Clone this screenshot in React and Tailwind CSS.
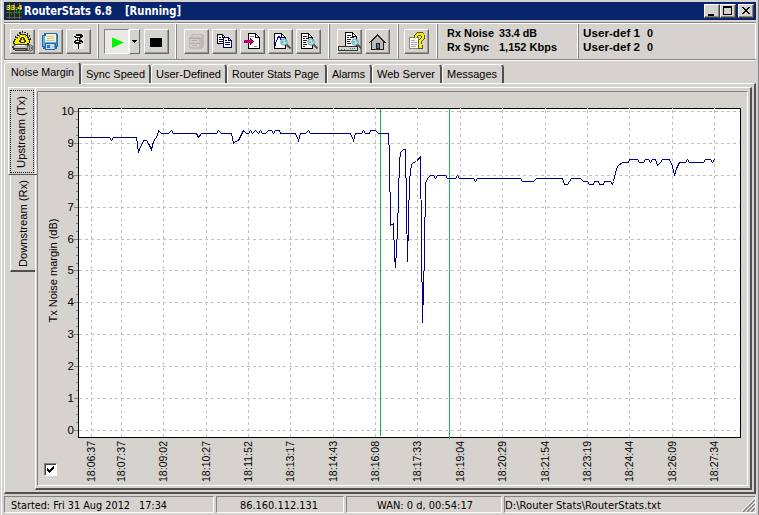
import React, { useState } from "react";

const points = [
    [78,137],[109,137],[111,140],[113,137],[136,137],[138,152],[140,146],[142,143],[143,140],[146,140],[148,143],[151,149],
    [153,141],[155,138],[157,135],[158,130],[161,133],[168,133],[171,130],[173,133],[196,133],[198,137],[201,133],[216,133],
    [218,130],[221,133],[231,133],[233,143],[235,141],[238,140],[240,136],[243,130],[246,133],[248,133],[250,130],[252,133],
    [255,130],[258,133],[260,130],[262,133],[265,133],[268,130],[271,130],[273,133],[275,130],[279,130],[280,133],[295,133],
    [298,140],[300,133],[305,133],[308,130],[310,133],[350,133],[353,140],[355,133],[361,133],[363,130],[365,133],[369,133],
    [370,130],[375,130],[378,133],[388,133],[389,156],[390,225],[393,223],[394,256],[395,267],[397,230],[399,161],[400,152],
    [403,149],[405,149],[407,261],[409,180],[411,164],[413,162],[416,161],[420,156],[422,322],[424,253],[425,182],[428,177],
    [430,175],[433,175],[435,178],[437,175],[445,175],[447,178],[455,178],[457,175],[459,178],[473,178],[475,181],[477,178],
    [520,178],[522,181],[533,181],[536,178],[562,178],[564,184],[567,184],[571,178],[580,178],[583,181],[587,181],[589,184],
    [593,184],[594,181],[598,181],[599,184],[603,184],[604,181],[610,181],[612,184],[613,181],[616,168],[618,165],[622,162],
    [628,162],[629,159],[637,159],[639,162],[643,162],[645,159],[648,159],[650,162],[652,159],[655,159],[657,165],[660,162],
    [662,159],[669,159],[672,166],[674,175],[676,168],[679,162],[685,162],[687,159],[689,162],[703,162],[705,159],[710,159],
    [712,162],[714,159],
]

const times = [
    [91, "18:06:37"], [121, "18:07:37"], [163, "18:09:02"], [206, "18:10:27"], [248, "18:11:52"], [290, "18:13:17"],
    [333, "18:14:43"], [375, "18:16:08"], [417, "18:17:33"], [460, "18:19:04"], [502, "18:20:29"], [545, "18:21:54"],
    [587, "18:23:19"], [629, "18:24:44"], [672, "18:26:09"], [714, "18:27:34"],
]

const levels = [[111, 10], [143, 9], [175, 8], [207, 7], [239, 6], [270, 5], [302, 4], [334, 3], [366, 2], [398, 1], [430, 0]]

const tabs = [
    { label: "Sync Speed", width: "w-[70px]", len: 59 },
    { label: "User-Defined", width: "w-[76px]", len: 65 },
    { label: "Router Stats Page", width: "w-[100px]", len: 87 },
    { label: "Alarms", width: "w-[45px]", len: 33 },
    { label: "Web Server", width: "w-[70px]", len: 58 },
    { label: "Messages", width: "w-[62px]", len: 50 },
]

// single line of text fitted to a fixed length
function Label({ children, len, size = 11, bold, tahoma, fill = "#000" }) {
    return (
        <svg width={len + 2} height="16" className="block shrink-0 overflow-visible">
            <text
                x="0" y="12" fontSize={size} fill={fill} fontWeight={bold ? 700 : 400}
                textLength={len} lengthAdjust="spacingAndGlyphs"
                fontFamily={tahoma ? "'DejaVu Sans Condensed', 'DejaVu Sans', sans-serif" : "'Liberation Sans', sans-serif"}
            >{children}</text>
        </svg>
    )
}

function Icon({ children }) {
    return <svg width="23" height="23" viewBox="0 0 23 23" shapeRendering="crispEdges" className="block">{children}</svg>
}

function ToolButton({ children }) {
    return (
        <button className="block h-[25px] w-[25px] shrink-0 border border-t-white border-l-white border-r-[#6b6968] border-b-[#6b6968] shadow-[inset_-1px_-1px_0_#9c9a98]">
            {children}
        </button>
    )
}

function Page({ x, y }) {
    return (
        <g>
            <path d={`M${x} ${y}h8l4 4v12h-12z`} fill="#fff" />
            <path d={`M${x + .5} ${y + .5}h7l4 4v11h-11zM${x + 7.5} ${y + .5}v4h4`} fill="none" stroke="#000" />
        </g>
    )
}

function Magnifier({ x, y }) {
    return (
        <g shapeRendering="auto">
            <path d={`M${x + 6.5} ${y + 6.5}l4 4`} stroke="#42525a" strokeWidth="2" />
            <circle cx={x + 4} cy={y + 4} r="3.2" fill="#c4e0e4" stroke="#7b929c" />
            <path d={`M${x + 2} ${y + 3}h2v2h-2zM${x + 5} ${y + 2}h1v2h-1z`} fill="#20dce8" />
        </g>
    )
}

function RouterIcon() {
    return (
        <Icon>
            <g fill="#2c2b22">
                <path d="M4 6h1v2H4zM6 4h1v2H6zM8 2h2v2H8zM11 1h1v2h-1zM13 2h2v1h-2zM16 3h1v2h-1zM18 5h1v2h-1zM19 8h1v2h-1z" />
                <path d="M3 9h2V7h2V5h2V4h6v1h2v2h1v2h1v4h-1v2H3v-1H2v-3h1z" />
            </g>
            <path d="M4 10h1V8h2V6h2V5h6v1h1v2h1v2h1v3h-2v1H4v-1H3v-1h1z" fill="#ffef00" />
            <path d="M8 5h1v2H8zM14 5h1v2h-1zM6 8h1v1H6z" fill="#8c8400" />
            <path d="M10 7h3v1h1v2h1v2h-1v1H9v-1H8v-2h1V8h1z" fill="#39382a" />
            <path d="M11 8h1v2h1v2h-3v-2h1z" fill="#ffef00" />
            <path d="M3 14h13v1h2v1h2v4h-2v1H4v-1H2v-2H1v-2h2z" fill="#39393a" />
            <path d="M4 15h12v1h1v2H3v-2h1z" fill="#c6c5c2" />
            <path d="M5 15h9v1H5z" fill="#fff" />
            <path d="M4 19h11v1H4z" fill="#848284" />
            <circle cx="19" cy="18" r="3" fill="#c0c0c0" stroke="#5a595a" shapeRendering="auto" />
            <path d="M18 16h1v4h-1zM20 17h1v2h-1z" fill="#525152" />
        </Icon>
    )
}

function DiskIcon() {
    return (
        <Icon>
            <path d="M5 3h13v1h1v13h-1v2h-2v1H6v-1H4v-2H3V5h2z" fill="#2169b5" />
            <path d="M4 6h2v10H4z" fill="#63b2e7" />
            <path d="M17 5h1v11h-1z" fill="#398ace" />
            <path d="M7 4h10v8H6V6h1z" fill="#f4f3c8" />
            <path d="M8 6h7v1H8zM8 8h7v1H8zM7 10h8v1H7z" fill="#c8c69c" />
            <path d="M6 12h11v1H6z" fill="#5aaee7" />
            <path d="M7 14h9v5H7z" fill="#c9dbe9" />
            <path d="M8 15h3v3H8z" fill="#3975ad" />
            <path d="M15 14h1v5h-1z" fill="#849aad" />
        </Icon>
    )
}

function PinIcon() {
    return (
        <Icon>
            <path d="M6 4h11v15H6z" fill="#e9e7e2" />
            <path d="M9 4h6v1h1v2h-1v1h-1v2h1v1h1v2h-2v1h-2v5h-1v-5H8v-1H7v-2h1v-1h2V8H8V7H7V6h2z" fill="#111" />
            <path d="M9 6h4v1H9zM11 8h1v2h-1zM9 11h3v1H9z" fill="#fff" />
            <path d="M13 8h1v2h-1zM13 12h2v1h-2z" fill="#848284" />
        </Icon>
    )
}

function CabinetIcon() {
    return (
        <Icon>
            <path d="M7 4h10l2 2v10l-3 3H5l-1-2V7z" fill="#bfb8bc" />
            <path d="M8 5h8l1 2H7zM5 9h9v4H5z" fill="#d3cacc" />
            <path d="M5 8h10v1H5zM5 13h10v1H5z" fill="#b0a8ad" />
            <path d="M5 14h9v3H5z" fill="#d8cfc8" />
            <path d="M7 10h5v1H7zM7 15h5v1H7z" fill="#b3abb6" />
        </Icon>
    )
}

function CopyIcon() {
    return (
        <Icon>
            <path d="M4 4h6l3 3v7H4z" fill="#fff" />
            <path d="M4.500 4.500h5l3 3v6h-8zM9.500 4.500v3h3" fill="none" stroke="#000" />
            <path d="M6 7h2v1H6zM6 9h4v1H6zM6 11h4v1H6z" fill="#000" />
            <path d="M10 7h6l3 3v8h-9z" fill="#fff" />
            <path d="M10.500 7.500h5l3 3v7h-8zM15.500 7.500v3h3" fill="none" stroke="#00007b" />
            <path d="M12 10h2v1h-2zM12 12h5v1h-5zM12 14h5v1h-5z" fill="#00007b" />
        </Icon>
    )
}

function ExportIcon() {
    return (
        <Icon>
            <Page x={7} y={3} />
            <path d="M9 6h4v1H9zM13 16h3v1h-3z" fill="#888" />
            <path d="M3 10h6V8h1v1h1v1h1v1h1v1h-1v1h-1v1h-1v1H9v-2H3z" fill="#7b0040" />
            <path d="M3 10h1v1H3zM5 10h1v1H5zM7 10h1v1H7zM9 10h1v1H9zM4 11h1v1H4zM6 11h1v1H6zM8 11h1v1H8zM10 11h1v1h-1zM5 12h1v1H5zM7 12h1v1H7zM9 12h1v1H9z" fill="#ff009c" />
        </Icon>
    )
}

function GraphIcon() {
    return (
        <Icon>
            <Page x={5} y={3} />
            <path d="M6.500 16v-3l2-4 1-3h1l1 3 3 3 1 3" fill="none" stroke="#0000ff" />
            <Magnifier x={11} y={8} />
        </Icon>
    )
}

function ReportIcon() {
    return (
        <Icon>
            <Page x={4} y={3} />
            <path d="M6 6h4v1H6zM6 8h2v1H6zM9 8h3v1H9zM6 10h4v1H6zM6 12h3v1H6zM6 14h4v1H6zM6 16h2v1H6z" fill="#222" />
            <Magnifier x={10} y={8} />
        </Icon>
    )
}

function ScanIcon() {
    return (
        <Icon>
            <Page x={7} y={2} />
            <path d="M9 5h4v1H9zM9 7h2v1H9zM12 7h4v1h-4zM9 9h4v1H9zM9 11h3v1H9zM9 13h4v1H9z" fill="#222" />
            <path d="M.5 16.500h19v4H.5z" fill="#d6d3ce" stroke="#333" />
            <path d="M3 19h1v1H3zM6 19h1v1H6zM12 18h1v1h-1zM14 18h1v1h-1zM16 18h1v1h-1z" fill="#00a63f" />
            <Magnifier x={13} y={8} />
        </Icon>
    )
}

function HomeIcon() {
    return (
        <Icon>
            <path d="M5.500 11v8.500h12V11L11.500 5z" fill="#bdbab5" stroke="#222" />
            <path d="M2 13h1v-1h1v-1h1v-1h1V9h1V8h1V7h1V6h1V5h3v1h1v1h1v1h1v1h1v1h1v1h1v1h1v1h-2v-1h-1v-1h-1v-1h-1V9h-1V8h-1V7h-1V6h-1v1H9v1H8v1H7v1H6v1H5v1H4v1z" fill="#292829" />
            <path d="M10 13h4v6h-4z" fill="#292829" />
            <path d="M11 14h2v4h-2z" fill="#4a7bad" />
        </Icon>
    )
}

function HelpIcon() {
    return (
        <Icon>
            <path d="M4.500 7.500h9v11h-9z" fill="#fff" stroke="#8a8786" />
            <path d="M6 10h4v1H6zM6 12h6v1H6zM6 14h6v1H6zM6 16h5v1H6z" fill="#adaaa6" />
            <path d="M3 4h1v1H3z" fill="#fff" />
            <path d="M11 8V6l2-2h4l1 2v2l-3 3v3" fill="none" stroke="#5a5500" strokeWidth="4" />
            <path d="M11 8V6l2-2h4l1 2v2l-3 3v3" fill="none" stroke="#ffef00" strokeWidth="2.500" />
            <path d="M13 15h5v4h-5z" fill="#5a5500" />
            <path d="M14 15h3v3h-3z" fill="#ffef00" />
        </Icon>
    )
}

function TitleBar() {
    return (
        <div className="flex h-[18px] items-center bg-[#08246b] pr-0.5 pl-0.5">
            <svg width="16" height="16" viewBox="0 0 16 16" shapeRendering="crispEdges">
                <path d="M0 0h16v16H0z" fill="#25271d" />
                <path d="M3.500 0v16M8.500 0v16M13.500 0v16M0 4.500h16M0 9.500h16M0 14.500h16" stroke="#58645a" />
                <path d="M4 9h3v1H4zM5 10h1v2H5zM10 7h1v4h-1zM12 8h2v2h-2z" fill="#008c00" />
                <text x="0" y="7" fontSize="8" fontWeight="700" textLength="16" lengthAdjust="spacingAndGlyphs" fill="#f5ef20" fontFamily="'Liberation Sans', sans-serif">33.4</text>
            </svg>
            <div className="ml-0.5 flex grow gap-[11px]">
                <Label len={88} size={12} bold tahoma fill="#fff">RouterStats 6.8</Label>
                <Label len={56} size={12} bold tahoma fill="#fff">[Running]</Label>
            </div>
            <WindowButton><path d="M3 9h6v2H3z" /></WindowButton>
            <WindowButton><path d="M2 1h9v9H2zM3 3v6h7V3z" fillRule="evenodd" /></WindowButton>
            <span className="w-0.5" />
            <WindowButton><path d="M3 2h2v1h1v1h2V3h1V2h2v1h-1v1H9v1H8v1h1v1h1v1h1v1H9V8H8V7H6v1H5v1H3V8h1V7h1V6h1V5H5V4H4V3H3z" /></WindowButton>
        </div>
    )
}

function WindowButton({ children }) {
    return (
        <button className="h-[14px] w-4 border border-t-white border-l-white border-r-[#424142] border-b-[#424142] bg-[#d6d3ce] shadow-[inset_-1px_-1px_0_#848284]">
            <svg width="14" height="12" shapeRendering="crispEdges">{children}</svg>
        </button>
    )
}

function Band({ className, children }) {
    return <div className={"flex h-[35px] shrink-0 items-center border-r border-l border-l-[#848284] border-r-white " + className}>{children}</div>
}

function Toolbar() {
    return (
        <div className="mt-0.5 flex h-[39px] border-t border-b border-t-[#848284] border-b-white">
            <div className="flex h-[37px] w-full border-t border-b border-t-white border-b-[#848284]">
                <Band className="w-[94px] gap-[3px] pl-[5px]">
                    <ToolButton><RouterIcon /></ToolButton>
                    <ToolButton><DiskIcon /></ToolButton>
                    <ToolButton><PinIcon /></ToolButton>
                </Band>
                <Band className="w-[78px] pl-[5px]">
                    <div className="h-[25px] w-[25px] border border-t-[#848284] border-l-[#848284] border-r-white border-b-white bg-[#ebe9e6]">
                        <svg width="23" height="23" className="block"><path d="M7 7.500l12 5-12 5.500z" fill="#00f700" /></svg>
                    </div>
                    <div className="mr-[4px] flex h-[25px] w-[11px] items-center justify-center border border-t-white border-l-white border-r-[#6b6968] border-b-[#6b6968]">
                        <svg width="5" height="3" shapeRendering="crispEdges"><path d="M0 0h5v1H0zM1 1h3v1H1zM2 2h1v1H2z" /></svg>
                    </div>
                    <ToolButton><Icon><path d="M5 8h12v9H5z" /></Icon></ToolButton>
                </Band>
                <Band className="w-[153px] gap-[3px] pl-[7px]">
                    <ToolButton><CabinetIcon /></ToolButton>
                    <ToolButton><CopyIcon /></ToolButton>
                    <ToolButton><ExportIcon /></ToolButton>
                    <ToolButton><GraphIcon /></ToolButton>
                    <ToolButton><ReportIcon /></ToolButton>
                </Band>
                <Band className="w-[69px] gap-[3px] pl-[7px]">
                    <ToolButton><ScanIcon /></ToolButton>
                    <ToolButton><HomeIcon /></ToolButton>
                </Band>
                <Band className="w-[39px] pl-[5px]">
                    <ToolButton><HelpIcon /></ToolButton>
                </Band>
                <Band className="w-[141px] pl-[9px]">
                    <div className="-mt-[5px]">
                        <div className="flex h-[14px] gap-[3px]"><Label len={47} bold>Rx Noise</Label><Label len={38} bold>33.4 dB</Label></div>
                        <div className="flex h-[14px] gap-[8px]"><Label len={42} bold>Rx Sync</Label><Label len={58} bold>1,152 Kbps</Label></div>
                    </div>
                </Band>
                <Band className="w-[178px] pl-[4px]">
                    <div className="-mt-[5px]">
                        <div className="flex h-[14px] gap-[5px]"><Label len={57} bold>User-def 1</Label><Label len={6} bold>0</Label></div>
                        <div className="flex h-[14px] gap-[5px]"><Label len={57} bold>User-def 2</Label><Label len={6} bold>0</Label></div>
                    </div>
                </Band>
            </div>
        </div>
    )
}

function Tabs() {
    return (
        <div className="flex h-[22px] items-end">
            <div className="relative z-10 -mb-px h-[22px] w-[77px] rounded-t-sm border-t border-r-2 border-l border-t-white border-l-white border-r-[#525152] bg-[#d6d3ce] pt-px pl-[6px]">
                <Label len={63}>Noise Margin</Label>
            </div>
            {tabs.map(tab => (
                <div key={tab.label} className={"h-[19px] rounded-t-sm border-t border-r-2 border-l border-t-white border-l-white border-r-[#525152] pt-px pl-[4px] " + tab.width}>
                    <Label len={tab.len}>{tab.label}</Label>
                </div>
            ))}
        </div>
    )
}

function Chart() {
    const minor = []
    for (let i = 0; i < 10; i++) {
        for (let j = 1; j < 4; j++) minor.push(Math.round(111 + i * 31.9 + j * 7.98))
    }
    const font = "'Liberation Sans', sans-serif"

    return (
        <svg width="709" height="393" viewBox="38 92 709 393" className="block">
            <g shapeRendering="crispEdges" fill="none">
                <path d="M78 108h663v330H78z" fill="#fff" />
                {levels.map(([y]) => <path key={y} d={`M79 ${y + .5}h661`} stroke="#c0c0c0" strokeDasharray="3 3" />)}
                {times.map(([x]) => <path key={x} d={`M${x + .5} 110v327`} stroke="#c0c0c0" strokeDasharray="3 3" />)}
                <path d="M78.500 108.500h662v329h-662z" stroke="#000" />
                {times.map(([x]) => <path key={x} d={`M${x + .5} 107v2`} stroke="#c0c0c0" />)}
                {levels.map(([y]) => <path key={y} d={`M74 ${y + .5}h4`} stroke="#848284" />)}
                {minor.map(y => <path key={y} d={`M76 ${y + .5}h2`} stroke="#848284" />)}
                <path d="M380.500 109v327M449.500 109v330" stroke="#22b14c" />
                <polyline points={points.map(([x, y]) => `${x + .5},${y + .5}`).join(" ")} stroke="#000084" />
            </g>
            {levels.map(([y, n]) => (
                <text key={n} x="74" y={y + 4} textAnchor="end" fontSize="11.5" fontFamily={font}>{n}</text>
            ))}
            {times.map(([x, t]) => (
                <text key={t} transform={`translate(${x + 4} 482) rotate(-90)`} fontSize="11" textLength="41" lengthAdjust="spacingAndGlyphs" fontFamily={font}>{t}</text>
            ))}
            <text transform="translate(57 322.500) rotate(-90)" fontSize="11" textLength="104" lengthAdjust="spacingAndGlyphs" fontFamily={font}>Tx Noise margin (dB)</text>
        </svg>
    )
}

function SideTab({ active, label, len }) {
    return (
        <div className={active
            ? "relative z-10 h-[87px] w-[29px] shrink-0 border-b border-l border-white border-b-[#525152] pt-[2px] pl-px"
            : "ml-0.5 h-[97px] w-[25px] shrink-0 border-b-2 border-l border-l-white border-b-[#525152]"}
        >
            <div className={active ? "h-[83px] w-[24px] border border-dotted border-black" : "h-full"}>
                <svg width="22" height={active ? 81 : 95} className="block overflow-visible">
                    <text transform={`translate(${active ? 14 : 16} ${active ? 77 : 92}) rotate(-90)`} fontSize="11" textLength={len} lengthAdjust="spacingAndGlyphs" fontFamily="'Liberation Sans', sans-serif">{label}</text>
                </svg>
            </div>
        </div>
    )
}

function StatusCell({ className, children }) {
    return <div className={"flex h-[17px] shrink-0 items-start border border-t-[#848284] border-l-[#848284] border-r-white border-b-white " + className}>{children}</div>
}

export default function App() {
    const [showAxis, setShowAxis] = useState(true)

    return (
        <div className="h-[515px] w-[759px] overflow-hidden border-r border-r-[#848284] bg-[#d6d3ce] pl-px">
            <div className="h-full border-l border-white pt-0.5 pr-0.5 pl-0.5">
                <TitleBar />
                <Toolbar />
                <Tabs />
                <div className="flex h-[411px] border-t border-r-2 border-b-2 border-l border-white border-r-[#525152] border-b-[#525152] pt-[3px] pr-[2px] pb-[2px] pl-[3px]">
                    <div className="w-[27px] shrink-0 border-t border-white">
                        <SideTab active label="Upstream (Tx)" len={72} />
                        <SideTab label="Downstream (Rx)" len={87} />
                    </div>
                    <div className="grow border-t border-r-2 border-b-2 border-l border-white border-r-[#525152] border-b-[#525152] pt-[3px] pr-[2px] pb-[2px] pl-px">
                        <div className="relative h-full border border-t-[#848284] border-l-[#848284] border-r-white border-b-white">
                            <Chart />
                            <button
                                onClick={() => setShowAxis(!showAxis)}
                                className="absolute top-[371px] left-[6px] h-[13px] w-[13px] border border-t-[#848284] border-l-[#848284] border-r-white border-b-white bg-white shadow-[inset_1px_1px_0_#424142]"
                            >
                                {showAxis && <svg width="11" height="11" shapeRendering="crispEdges" className="block"><path d="M2 4h1v1h1v1h1V5h1V4h1V3h1V2h1v3H8v1H7v1H6v1H5v1H4V8H3V7H2z" /></svg>}
                            </button>
                        </div>
                    </div>
                </div>
                <div className="mt-0.5 flex gap-0.5">
                    <StatusCell className="w-[210px] pl-[6px]"><Label len={119} tahoma>Started: Fri 31 Aug 2012</Label><span className="w-[7px]" /><Label len={28} tahoma>17:34</Label></StatusCell>
                    <StatusCell className="w-[128px] pl-[23px]"><Label len={78} tahoma>86.160.112.131</Label></StatusCell>
                    <StatusCell className="w-[156px] pl-[30px]"><Label len={96} tahoma>WAN: 0 d, 00:54:17</Label></StatusCell>
                    <StatusCell className="w-[252px] justify-between">
                        <Label len={156} tahoma>D:\Router Stats\RouterStats.txt</Label>
                        <svg width="13" height="15">
                            <path d="M1 15L13 3M5 15l8-8M9 15l4-4" stroke="#848284" strokeWidth="1.500" />
                            <path d="M0 14L13 1M4 14l9-9M8 14l5-5" stroke="#fff" />
                        </svg>
                    </StatusCell>
                </div>
            </div>
        </div>
    )
}
